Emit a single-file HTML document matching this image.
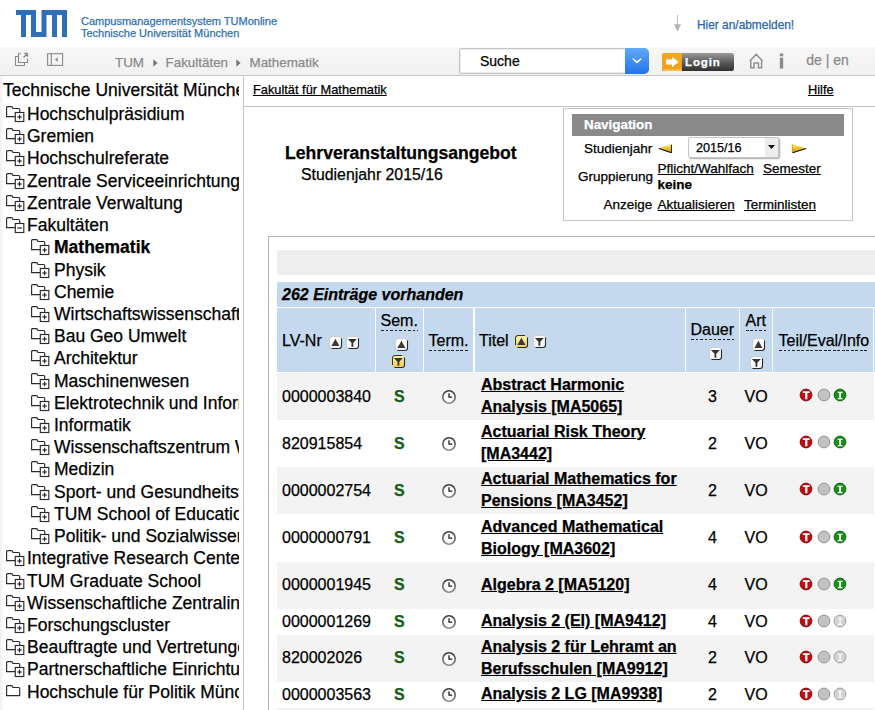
<!DOCTYPE html>
<html><head><meta charset="utf-8">
<style>
*{box-sizing:border-box;margin:0;padding:0}
html,body{width:875px;height:710px;overflow:hidden;background:#fff;font-family:"Liberation Sans",sans-serif;color:#000}
body{position:relative;-webkit-text-stroke:0.25px currentColor}
a{color:#000;text-decoration:underline}
.abs{position:absolute}
#hdr{left:0;top:0;width:875px;height:47px;background:#fff}
#hdrtxt{left:81px;top:15px;font-size:11px;line-height:12px;color:#3070b3;white-space:nowrap}
#anm{left:697px;top:17.500px;font-size:11.900px;line-height:14px;color:#2a66ad;white-space:nowrap}
#tb{left:0;top:47px;width:875px;height:29px;background:linear-gradient(#f7f7f7,#f1f1f1);border-bottom:1px solid #c6c6c6}
.bcw{top:53.500px;font-size:13.400px;line-height:18px;color:#8a8a8a;white-space:nowrap}
#srch{left:459px;top:48px;width:190px;height:25.500px;border:1px solid #c4c4c4;border-radius:1.500px 5px 5px 1.500px;box-shadow:inset 0 0 0 1px #ececec;background:#fff}
#srch span{position:absolute;left:20px;top:3.500px;font-size:14px;line-height:17px;color:#000}
#srchb{left:625px;top:48px;width:24px;height:25.500px;border-radius:0 5px 5px 0;background:linear-gradient(#62aaf8,#2173ea)}
#login{left:662px;top:52.500px;width:71.500px;height:18.500px;background:linear-gradient(#9c9c9c,#5c5c5c 50%,#303030);border-radius:2.500px}
#login .o{position:absolute;left:0;top:0;width:20px;height:18.500px;background:linear-gradient(#f5a623 0,#f5a01a 85%,#f9c673 100%);border-radius:2.500px 0 0 2.500px}
#login .t{position:absolute;left:23px;top:2.300px;font-size:11.500px;font-weight:bold;color:#fff;line-height:14px;letter-spacing:.9px}
#lang{left:806.300px;top:52.200px;font-size:14px;line-height:17px;color:#8a8a8a;white-space:nowrap}
#side{left:0;top:76px;width:244px;height:634px;border-right:1px solid #c9c9c9;overflow:hidden;background:linear-gradient(90deg,#f0f0f0 0,#fff 4px)}
#side .in{position:absolute;left:0;top:3.3px;width:239px;height:640px;overflow:hidden}
.r{height:22.22px;line-height:22.22px;font-size:17.5px;white-space:nowrap;position:relative}
.r.t{padding-left:3px;font-size:17.5px;height:23.7px}
.r .ic{position:absolute;top:3px;width:19px;height:17px}
.r.l1 .ic{left:6px}.r.l1{padding-left:27px}
.r.l2 .ic{left:31px}.r.l2{padding-left:54px}
.r b{font-weight:bold}
#crumb{left:253px;top:83.200px;font-size:12.800px;line-height:14px}
#hilfe{left:808px;top:83.200px;font-size:12.800px;line-height:14px}
#hl{left:244px;top:106px;width:631px;height:1px;background:#c2c2c2}
#nav{left:563px;top:108px;width:290px;height:113px;border:1px solid #c6c6c6;background:#fff}
#navh{left:572px;top:114px;width:272px;height:22px;background:#8a8a8a;color:#fff;font-weight:bold;font-size:13.4px;line-height:22px;padding-left:12px}
.nl{font-size:13.5px;line-height:14px;white-space:nowrap}
#h1{left:285px;top:142.700px;font-size:17.600px;font-weight:bold;line-height:20px;white-space:nowrap}
#h2{left:301px;top:165.700px;font-size:15.850px;line-height:18px;white-space:nowrap}
#box{left:268px;top:236px;width:620px;height:500px;border:1px solid #b4b4b4;background:#fff}
#gbar{left:277px;top:250px;width:598px;height:25px;background:#eee}
#cnt{left:277px;top:282px;width:598px;height:25px;background:#c4d9ee;font-size:16px;font-weight:bold;font-style:italic;line-height:25px;padding-left:5px}
.th{top:308px;height:64px;background:#c4d9ee;font-size:16px}
.th span.lb{position:absolute;white-space:nowrap;line-height:18px}
.dot{padding-bottom:1px;background:repeating-linear-gradient(90deg,#222 0,#222 2.500px,transparent 2.500px,transparent 4.500px) left bottom/100% 1px no-repeat}
.row{left:277px;width:597px}
.row.g{background:#f3f3f3}
.c{position:absolute;font-size:16px;line-height:18px;white-space:nowrap}
.c.s{color:#145e18;font-weight:bold}
.c.ti{font-weight:bold;line-height:22px;white-space:normal;width:212px}
.hl{font-size:16px;line-height:18px;white-space:nowrap}
</style></head><body>

<div id="hdr" class="abs"></div>
<svg width="0" height="0" style="position:absolute"><defs><linearGradient id="gw" x1="0" y1="0" x2="0" y2="1"><stop offset="0" stop-color="#fff"/><stop offset="1" stop-color="#f4f4f4"/></linearGradient><linearGradient id="gc" x1="0" y1="0" x2="0" y2="1"><stop offset="0" stop-color="#3c3c3c"/><stop offset="1" stop-color="#8c8c8c"/></linearGradient><linearGradient id="gy" x1="0" y1="0" x2="0" y2="1"><stop offset="0" stop-color="#fdf3b8"/><stop offset="1" stop-color="#f6cb48"/></linearGradient></defs></svg>
<svg class="abs" style="left:16px;top:10px" width="51" height="27" viewBox="0 0 51 27"><path fill="#2f6fb5" d="M0 0H20V27H15V5H10V27H5V5H0Z M15 22H25.5V0H51V27H46V5H41V27H36V5H30.5V27H15Z"/></svg>
<div id="hdrtxt" class="abs">Campusmanagementsystem TUMonline<br>Technische Universität München</div>
<svg class="abs" style="left:672px;top:14px" width="12" height="19" viewBox="0 0 12 19"><path d="M5.500 1V11" stroke="#bdbdbd" stroke-width="1.1"/><path d="M2 10.300H9L5.500 17.800Z" fill="#b4b4b4"/></svg>
<div id="anm" class="abs">Hier an/abmelden!</div>

<div id="tb" class="abs"></div>
<svg class="abs" style="left:14px;top:52px" width="16" height="15" viewBox="0 0 16 15" fill="none" stroke="#8a8a8a" stroke-width="1.1"><path d="M4.500 4.500H1.500V13.500H10.500V10.700"/><path d="M7 1.700H4.500V10.500H13.500V6.500"/><path d="M9.500 5.500L13.300 1.700M10.300 1.500H13.500V4.700" stroke-width="1.3"/></svg>
<svg class="abs" style="left:46px;top:52px" width="18" height="15" viewBox="0 0 18 15" fill="none" stroke="#8a8a8a" stroke-width="1.1"><rect x="1.600" y="1.700" width="15" height="11.700"/><path d="M5.300 1.700V13.400"/><path d="M11.800 5.200L9 7.500L11.800 9.800Z" fill="#8a8a8a" stroke="none"/></svg>
<div class="abs bcw" style="left:115px">TUM</div><svg class="abs" style="left:152.500px;top:59px" width="5" height="8" viewBox="0 0 5 8"><path d="M0.300 0.300L4.600 4L0.300 7.700Z" fill="#777"/></svg>
<div class="abs bcw" style="left:165.500px">Fakultäten</div><svg class="abs" style="left:236.300px;top:59px" width="5" height="8" viewBox="0 0 5 8"><path d="M0.300 0.300L4.600 4L0.300 7.700Z" fill="#777"/></svg>
<div class="abs bcw" style="left:249.500px">Mathematik</div>
<div id="srch" class="abs"><span>Suche</span></div>
<div id="srchb" class="abs"><svg width="24" height="25" viewBox="0 0 24 25"><path d="M8.300 11L12 14.300L15.700 11" fill="none" stroke="#fff" stroke-width="1.600" stroke-linecap="round" stroke-linejoin="round"/></svg></div>
<div id="login" class="abs"><div class="o"><svg width="20" height="19" viewBox="0 0 20 19"><path d="M4 6.500H10V3.800L16.600 9L10 14.200V11.500H4Z" fill="#fff"/></svg></div><div class="t">Login</div></div>
<svg class="abs" style="left:748px;top:52px" width="17" height="18" viewBox="0 0 17 18" fill="none" stroke="#909090" stroke-width="1.500"><path d="M1.800 9L8.200 2.400L14.600 9M2.800 8.500V15.800H6V11H10.400V15.800H13.600V8.500" stroke-linejoin="miter"/></svg>
<svg class="abs" style="left:777px;top:52px" width="8" height="18" viewBox="0 0 8 18"><rect x="2.800" y="1.500" width="3.400" height="2.800" fill="#8c8c8c"/><rect x="2.800" y="5.700" width="3.400" height="10.900" fill="#8c8c8c"/></svg>
<div id="lang" class="abs">de | en</div>

<div id="side" class="abs"><div class="in">
<div class="r t">Technische Universität München</div>
<div class="r l1"><svg class="ic" width="19" height="17" viewBox="0 0 19 17" fill="none" stroke="#2a2a2a" stroke-width="1.15"><path d="M9 10.600H0.600V1.600Q0.600 0.600 1.600 0.600H5.300Q6.200 0.600 6.500 1.400L6.900 2.500H12.700Q13.700 2.500 13.700 3.500V6.200"/><rect x="9.300" y="6.500" width="8.500" height="9"/><path d="M11.300 11H15.800" stroke-width="1.2"/><path d="M13.550 8.700V13.300" stroke-width="1.2"/></svg>Hochschulpräsidium</div>
<div class="r l1"><svg class="ic" width="19" height="17" viewBox="0 0 19 17" fill="none" stroke="#2a2a2a" stroke-width="1.15"><path d="M9 10.600H0.600V1.600Q0.600 0.600 1.600 0.600H5.300Q6.200 0.600 6.500 1.400L6.900 2.500H12.700Q13.700 2.500 13.700 3.500V6.200"/><rect x="9.300" y="6.500" width="8.500" height="9"/><path d="M11.300 11H15.800" stroke-width="1.2"/><path d="M13.550 8.700V13.300" stroke-width="1.2"/></svg>Gremien</div>
<div class="r l1"><svg class="ic" width="19" height="17" viewBox="0 0 19 17" fill="none" stroke="#2a2a2a" stroke-width="1.15"><path d="M9 10.600H0.600V1.600Q0.600 0.600 1.600 0.600H5.300Q6.200 0.600 6.500 1.400L6.900 2.500H12.700Q13.700 2.500 13.700 3.500V6.200"/><rect x="9.300" y="6.500" width="8.500" height="9"/><path d="M11.300 11H15.800" stroke-width="1.2"/><path d="M13.550 8.700V13.300" stroke-width="1.2"/></svg>Hochschulreferate</div>
<div class="r l1"><svg class="ic" width="19" height="17" viewBox="0 0 19 17" fill="none" stroke="#2a2a2a" stroke-width="1.15"><path d="M9 10.600H0.600V1.600Q0.600 0.600 1.600 0.600H5.300Q6.200 0.600 6.500 1.400L6.900 2.500H12.700Q13.700 2.500 13.700 3.500V6.200"/><rect x="9.300" y="6.500" width="8.500" height="9"/><path d="M11.300 11H15.800" stroke-width="1.2"/><path d="M13.550 8.700V13.300" stroke-width="1.2"/></svg>Zentrale Serviceeinrichtungen</div>
<div class="r l1"><svg class="ic" width="19" height="17" viewBox="0 0 19 17" fill="none" stroke="#2a2a2a" stroke-width="1.15"><path d="M9 10.600H0.600V1.600Q0.600 0.600 1.600 0.600H5.300Q6.200 0.600 6.500 1.400L6.900 2.500H12.700Q13.700 2.500 13.700 3.500V6.200"/><rect x="9.300" y="6.500" width="8.500" height="9"/><path d="M11.300 11H15.800" stroke-width="1.2"/><path d="M13.550 8.700V13.300" stroke-width="1.2"/></svg>Zentrale Verwaltung</div>
<div class="r l1"><svg class="ic" width="19" height="17" viewBox="0 0 19 17" fill="none" stroke="#2a2a2a" stroke-width="1.15"><path d="M9 10.600H0.600V1.600Q0.600 0.600 1.600 0.600H5.300Q6.200 0.600 6.500 1.400L6.900 2.500H12.700Q13.700 2.500 13.700 3.500V6.200"/><rect x="9.300" y="6.500" width="8.500" height="9"/><path d="M11.300 11H15.800" stroke-width="1.2"/></svg>Fakultäten</div>
<div class="r l2"><svg class="ic" width="19" height="17" viewBox="0 0 19 17" fill="none" stroke="#2a2a2a" stroke-width="1.15"><path d="M9 10.600H0.600V1.600Q0.600 0.600 1.600 0.600H5.300Q6.200 0.600 6.500 1.400L6.900 2.500H12.700Q13.700 2.500 13.700 3.500V6.200"/><rect x="9.300" y="6.500" width="8.500" height="9"/><path d="M11.300 11H15.800" stroke-width="1.2"/><path d="M13.550 8.700V13.300" stroke-width="1.2"/></svg><b>Mathematik</b></div>
<div class="r l2"><svg class="ic" width="19" height="17" viewBox="0 0 19 17" fill="none" stroke="#2a2a2a" stroke-width="1.15"><path d="M9 10.600H0.600V1.600Q0.600 0.600 1.600 0.600H5.300Q6.200 0.600 6.500 1.400L6.900 2.500H12.700Q13.700 2.500 13.700 3.500V6.200"/><rect x="9.300" y="6.500" width="8.500" height="9"/><path d="M11.300 11H15.800" stroke-width="1.2"/><path d="M13.550 8.700V13.300" stroke-width="1.2"/></svg>Physik</div>
<div class="r l2"><svg class="ic" width="19" height="17" viewBox="0 0 19 17" fill="none" stroke="#2a2a2a" stroke-width="1.15"><path d="M9 10.600H0.600V1.600Q0.600 0.600 1.600 0.600H5.300Q6.200 0.600 6.500 1.400L6.900 2.500H12.700Q13.700 2.500 13.700 3.500V6.200"/><rect x="9.300" y="6.500" width="8.500" height="9"/><path d="M11.300 11H15.800" stroke-width="1.2"/><path d="M13.550 8.700V13.300" stroke-width="1.2"/></svg>Chemie</div>
<div class="r l2"><svg class="ic" width="19" height="17" viewBox="0 0 19 17" fill="none" stroke="#2a2a2a" stroke-width="1.15"><path d="M9 10.600H0.600V1.600Q0.600 0.600 1.600 0.600H5.300Q6.200 0.600 6.500 1.400L6.900 2.500H12.700Q13.700 2.500 13.700 3.500V6.200"/><rect x="9.300" y="6.500" width="8.500" height="9"/><path d="M11.300 11H15.800" stroke-width="1.2"/><path d="M13.550 8.700V13.300" stroke-width="1.2"/></svg>Wirtschaftswissenschaften</div>
<div class="r l2"><svg class="ic" width="19" height="17" viewBox="0 0 19 17" fill="none" stroke="#2a2a2a" stroke-width="1.15"><path d="M9 10.600H0.600V1.600Q0.600 0.600 1.600 0.600H5.300Q6.200 0.600 6.500 1.400L6.900 2.500H12.700Q13.700 2.500 13.700 3.500V6.200"/><rect x="9.300" y="6.500" width="8.500" height="9"/><path d="M11.300 11H15.800" stroke-width="1.2"/><path d="M13.550 8.700V13.300" stroke-width="1.2"/></svg>Bau Geo Umwelt</div>
<div class="r l2"><svg class="ic" width="19" height="17" viewBox="0 0 19 17" fill="none" stroke="#2a2a2a" stroke-width="1.15"><path d="M9 10.600H0.600V1.600Q0.600 0.600 1.600 0.600H5.300Q6.200 0.600 6.500 1.400L6.900 2.500H12.700Q13.700 2.500 13.700 3.500V6.200"/><rect x="9.300" y="6.500" width="8.500" height="9"/><path d="M11.300 11H15.800" stroke-width="1.2"/><path d="M13.550 8.700V13.300" stroke-width="1.2"/></svg>Architektur</div>
<div class="r l2"><svg class="ic" width="19" height="17" viewBox="0 0 19 17" fill="none" stroke="#2a2a2a" stroke-width="1.15"><path d="M9 10.600H0.600V1.600Q0.600 0.600 1.600 0.600H5.300Q6.200 0.600 6.500 1.400L6.900 2.500H12.700Q13.700 2.500 13.700 3.500V6.200"/><rect x="9.300" y="6.500" width="8.500" height="9"/><path d="M11.300 11H15.800" stroke-width="1.2"/><path d="M13.550 8.700V13.300" stroke-width="1.2"/></svg>Maschinenwesen</div>
<div class="r l2"><svg class="ic" width="19" height="17" viewBox="0 0 19 17" fill="none" stroke="#2a2a2a" stroke-width="1.15"><path d="M9 10.600H0.600V1.600Q0.600 0.600 1.600 0.600H5.300Q6.200 0.600 6.500 1.400L6.900 2.500H12.700Q13.700 2.500 13.700 3.500V6.200"/><rect x="9.300" y="6.500" width="8.500" height="9"/><path d="M11.300 11H15.800" stroke-width="1.2"/><path d="M13.550 8.700V13.300" stroke-width="1.2"/></svg>Elektrotechnik und Informationstechnik</div>
<div class="r l2"><svg class="ic" width="19" height="17" viewBox="0 0 19 17" fill="none" stroke="#2a2a2a" stroke-width="1.15"><path d="M9 10.600H0.600V1.600Q0.600 0.600 1.600 0.600H5.300Q6.200 0.600 6.500 1.400L6.900 2.500H12.700Q13.700 2.500 13.700 3.500V6.200"/><rect x="9.300" y="6.500" width="8.500" height="9"/><path d="M11.300 11H15.800" stroke-width="1.2"/><path d="M13.550 8.700V13.300" stroke-width="1.2"/></svg>Informatik</div>
<div class="r l2"><svg class="ic" width="19" height="17" viewBox="0 0 19 17" fill="none" stroke="#2a2a2a" stroke-width="1.15"><path d="M9 10.600H0.600V1.600Q0.600 0.600 1.600 0.600H5.300Q6.200 0.600 6.500 1.400L6.900 2.500H12.700Q13.700 2.500 13.700 3.500V6.200"/><rect x="9.300" y="6.500" width="8.500" height="9"/><path d="M11.300 11H15.800" stroke-width="1.2"/><path d="M13.550 8.700V13.300" stroke-width="1.2"/></svg>Wissenschaftszentrum Weihenstephan</div>
<div class="r l2"><svg class="ic" width="19" height="17" viewBox="0 0 19 17" fill="none" stroke="#2a2a2a" stroke-width="1.15"><path d="M9 10.600H0.600V1.600Q0.600 0.600 1.600 0.600H5.300Q6.200 0.600 6.500 1.400L6.900 2.500H12.700Q13.700 2.500 13.700 3.500V6.200"/><rect x="9.300" y="6.500" width="8.500" height="9"/><path d="M11.300 11H15.800" stroke-width="1.2"/><path d="M13.550 8.700V13.300" stroke-width="1.2"/></svg>Medizin</div>
<div class="r l2"><svg class="ic" width="19" height="17" viewBox="0 0 19 17" fill="none" stroke="#2a2a2a" stroke-width="1.15"><path d="M9 10.600H0.600V1.600Q0.600 0.600 1.600 0.600H5.300Q6.200 0.600 6.500 1.400L6.900 2.500H12.700Q13.700 2.500 13.700 3.500V6.200"/><rect x="9.300" y="6.500" width="8.500" height="9"/><path d="M11.300 11H15.800" stroke-width="1.2"/><path d="M13.550 8.700V13.300" stroke-width="1.2"/></svg>Sport- und Gesundheitswissenschaften</div>
<div class="r l2"><svg class="ic" width="19" height="17" viewBox="0 0 19 17" fill="none" stroke="#2a2a2a" stroke-width="1.15"><path d="M9 10.600H0.600V1.600Q0.600 0.600 1.600 0.600H5.300Q6.200 0.600 6.500 1.400L6.900 2.500H12.700Q13.700 2.500 13.700 3.500V6.200"/><rect x="9.300" y="6.500" width="8.500" height="9"/><path d="M11.300 11H15.800" stroke-width="1.2"/><path d="M13.550 8.700V13.300" stroke-width="1.2"/></svg>TUM School of Education</div>
<div class="r l2"><svg class="ic" width="19" height="17" viewBox="0 0 19 17" fill="none" stroke="#2a2a2a" stroke-width="1.15"><path d="M9 10.600H0.600V1.600Q0.600 0.600 1.600 0.600H5.300Q6.200 0.600 6.500 1.400L6.900 2.500H12.700Q13.700 2.500 13.700 3.500V6.200"/><rect x="9.300" y="6.500" width="8.500" height="9"/><path d="M11.300 11H15.800" stroke-width="1.2"/><path d="M13.550 8.700V13.300" stroke-width="1.2"/></svg>Politik- und Sozialwissenschaften</div>
<div class="r l1"><svg class="ic" width="19" height="17" viewBox="0 0 19 17" fill="none" stroke="#2a2a2a" stroke-width="1.15"><path d="M9 10.600H0.600V1.600Q0.600 0.600 1.600 0.600H5.300Q6.200 0.600 6.500 1.400L6.900 2.500H12.700Q13.700 2.500 13.700 3.500V6.200"/><rect x="9.300" y="6.500" width="8.500" height="9"/><path d="M11.300 11H15.800" stroke-width="1.2"/><path d="M13.550 8.700V13.300" stroke-width="1.2"/></svg>Integrative Research Center</div>
<div class="r l1"><svg class="ic" width="19" height="17" viewBox="0 0 19 17" fill="none" stroke="#2a2a2a" stroke-width="1.15"><path d="M9 10.600H0.600V1.600Q0.600 0.600 1.600 0.600H5.300Q6.200 0.600 6.500 1.400L6.900 2.500H12.700Q13.700 2.500 13.700 3.500V6.200"/><rect x="9.300" y="6.500" width="8.500" height="9"/><path d="M11.300 11H15.800" stroke-width="1.2"/><path d="M13.550 8.700V13.300" stroke-width="1.2"/></svg>TUM Graduate School</div>
<div class="r l1"><svg class="ic" width="19" height="17" viewBox="0 0 19 17" fill="none" stroke="#2a2a2a" stroke-width="1.15"><path d="M9 10.600H0.600V1.600Q0.600 0.600 1.600 0.600H5.300Q6.200 0.600 6.500 1.400L6.900 2.500H12.700Q13.700 2.500 13.700 3.500V6.200"/><rect x="9.300" y="6.500" width="8.500" height="9"/><path d="M11.300 11H15.800" stroke-width="1.2"/><path d="M13.550 8.700V13.300" stroke-width="1.2"/></svg>Wissenschaftliche Zentralinstitute</div>
<div class="r l1"><svg class="ic" width="19" height="17" viewBox="0 0 19 17" fill="none" stroke="#2a2a2a" stroke-width="1.15"><path d="M9 10.600H0.600V1.600Q0.600 0.600 1.600 0.600H5.300Q6.200 0.600 6.500 1.400L6.900 2.500H12.700Q13.700 2.500 13.700 3.500V6.200"/><rect x="9.300" y="6.500" width="8.500" height="9"/><path d="M11.300 11H15.800" stroke-width="1.2"/><path d="M13.550 8.700V13.300" stroke-width="1.2"/></svg>Forschungscluster</div>
<div class="r l1"><svg class="ic" width="19" height="17" viewBox="0 0 19 17" fill="none" stroke="#2a2a2a" stroke-width="1.15"><path d="M9 10.600H0.600V1.600Q0.600 0.600 1.600 0.600H5.300Q6.200 0.600 6.500 1.400L6.900 2.500H12.700Q13.700 2.500 13.700 3.500V6.200"/><rect x="9.300" y="6.500" width="8.500" height="9"/><path d="M11.300 11H15.800" stroke-width="1.2"/><path d="M13.550 8.700V13.300" stroke-width="1.2"/></svg>Beauftragte und Vertretungen</div>
<div class="r l1"><svg class="ic" width="19" height="17" viewBox="0 0 19 17" fill="none" stroke="#2a2a2a" stroke-width="1.15"><path d="M9 10.600H0.600V1.600Q0.600 0.600 1.600 0.600H5.300Q6.200 0.600 6.500 1.400L6.900 2.500H12.700Q13.700 2.500 13.700 3.500V6.200"/><rect x="9.300" y="6.500" width="8.500" height="9"/><path d="M11.300 11H15.800" stroke-width="1.2"/><path d="M13.550 8.700V13.300" stroke-width="1.2"/></svg>Partnerschaftliche Einrichtungen</div>
<div class="r l1"><svg class="ic" style="top:4.400px" width="19" height="17" viewBox="0 0 19 17" fill="none" stroke="#2a2a2a" stroke-width="1.15"><path d="M0.600 10.600V1.600Q0.600 0.600 1.600 0.600H5.300Q6.200 0.600 6.500 1.400L6.900 2.500H12.700Q13.700 2.500 13.700 3.500V10.600Z"/></svg>Hochschule für Politik München</div>
</div></div>

<a id="crumb" class="abs">Fakultät für Mathematik</a>
<a id="hilfe" class="abs">Hilfe</a>
<div id="hl" class="abs"></div>
<div id="nav" class="abs"></div>
<div id="navh" class="abs">Navigation</div>
<div class="abs nl" style="left:584px;top:142px">Studienjahr</div>
<svg class="abs" style="left:658px;top:143px" width="15" height="11" viewBox="0 0 15 11"><defs><linearGradient id="gd" x1="0" y1="0" x2="0" y2="1"><stop offset="0" stop-color="#fff0a0"/><stop offset=".35" stop-color="#f0cf45"/><stop offset=".75" stop-color="#d6ab18"/><stop offset="1" stop-color="#b88c10"/></linearGradient></defs><path d="M0.800 5.300L13.700 1V9.900Z" fill="url(#gd)"/><path d="M0.800 5.500L13.400 9.700" stroke="#151005" stroke-width="1.100" fill="none"/><path d="M13.500 1.800V9.900" stroke="#3a1c0a" stroke-width="1" fill="none"/></svg>
<div class="abs" style="left:688px;top:137px;width:91px;height:21px;border:1px solid #c4c4c4;border-radius:2px;background:#fff;box-shadow:1px 1px 1.500px rgba(0,0,0,.35)"></div>
<div class="abs" style="left:765px;top:138px;width:13px;height:19px;background:#ececec;border-radius:0 2px 2px 0"></div>
<svg class="abs" style="left:767px;top:144px" width="9" height="6" viewBox="0 0 9 6"><path d="M1 1H8L4.500 5Z" fill="#111"/></svg>
<div class="abs" style="left:696px;top:141px;font-size:12.600px;line-height:14px">2015/16</div>
<svg class="abs" style="left:791px;top:143px" width="16" height="11" viewBox="0 0 16 11"><path d="M15.200 5.300L1 1V9.900Z" fill="url(#gd)"/><path d="M1.300 1.300V9.500" stroke="#caa224" stroke-width="1" fill="none"/><path d="M15.200 5.500L1.600 9.700" stroke="#151005" stroke-width="1.100" fill="none"/></svg>
<div class="abs nl" style="left:578px;top:170px">Gruppierung</div>
<a class="abs nl" style="left:657.500px;top:161.500px">Pflicht/Wahlfach</a>
<a class="abs nl" style="left:763px;top:161.500px">Semester</a>
<div class="abs nl" style="left:657.500px;top:178px;font-weight:bold">keine</div>
<div class="abs nl" style="left:603.500px;top:197.500px">Anzeige</div>
<a class="abs nl" style="left:657.500px;top:197.500px">Aktualisieren</a>
<a class="abs nl" style="left:744px;top:197.500px">Terminlisten</a>
<div id="h1" class="abs">Lehrveranstaltungsangebot</div>
<div id="h2" class="abs">Studienjahr 2015/16</div>

<div id="box" class="abs"></div>
<div id="gbar" class="abs"></div>
<div id="cnt" class="abs">262 Einträge vorhanden</div>
<div class="abs th" style="left:277px;width:98.19999999999999px"></div><div class="abs th" style="left:376.2px;width:47.0px"></div><div class="abs th" style="left:424.2px;width:49.30000000000001px"></div><div class="abs th" style="left:474.5px;width:210.60000000000002px"></div><div class="abs th" style="left:686.1px;width:53.10000000000002px"></div><div class="abs th" style="left:740.2px;width:31.799999999999955px"></div><div class="abs th" style="left:773px;width:99.89999999999998px"></div><div class="abs th" style="left:873.900px;width:1.100px"></div><div class="abs hl" style="left:282px;top:331.500px">LV-Nr</div><svg class="abs" style="left:328px;top:335px" width="15" height="15" viewBox="-1 -1 15 15"><rect x="0.500" y="0.500" width="12" height="12" rx="2.600" fill="url(#gw)" stroke="#c9c9c9" stroke-width="1"/><path d="M12.500 2.500V10Q12.500 12.500 10 12.500H2.500" fill="none" stroke="#2a2a2a" stroke-width="1.1"/><path d="M0.500 10V3Q0.500 0.500 3 0.500H10" fill="none" stroke="#cfcfcf" stroke-width="1"/><path d="M6.400 2.700L10.400 10.100H2.400Z" fill="#3a3a3a"/></svg><svg class="abs" style="left:345px;top:335px" width="15" height="15" viewBox="-1 -1 15 15"><rect x="0.500" y="0.500" width="12" height="12" rx="2.600" fill="url(#gw)" stroke="#c9c9c9" stroke-width="1"/><path d="M12.500 2.500V10Q12.500 12.500 10 12.500H2.500" fill="none" stroke="#2a2a2a" stroke-width="1.1"/><path d="M0.500 10V3Q0.500 0.500 3 0.500H10" fill="none" stroke="#cfcfcf" stroke-width="1"/><path d="M1.900 2.900H10.900L7.300 6.800V10.800H5.500V6.800Z" fill="#333"/></svg><div class="abs hl dot" style="left:380.500px;top:311.500px">Sem.</div><svg class="abs" style="left:393.7px;top:337px" width="15" height="15" viewBox="-1 -1 15 15"><rect x="0.500" y="0.500" width="12" height="12" rx="2.600" fill="url(#gw)" stroke="#c9c9c9" stroke-width="1"/><path d="M12.500 2.500V10Q12.500 12.500 10 12.500H2.500" fill="none" stroke="#2a2a2a" stroke-width="1.1"/><path d="M0.500 10V3Q0.500 0.500 3 0.500H10" fill="none" stroke="#cfcfcf" stroke-width="1"/><path d="M6.400 2.700L10.400 10.100H2.400Z" fill="#3a3a3a"/></svg><svg class="abs" style="left:391.3px;top:354px" width="15" height="15" viewBox="-1 -1 15 15"><rect x="0.500" y="0.500" width="12" height="12" rx="2.600" fill="url(#gy)" stroke="#c9c9c9" stroke-width="1"/><path d="M12.500 2.500V10Q12.500 12.500 10 12.500H2.500" fill="none" stroke="#2a2a2a" stroke-width="1.1"/><path d="M0.500 10V3Q0.500 0.500 3 0.500H10" fill="none" stroke="#3a3320" stroke-width="1"/><path d="M1.900 2.900H10.900L7.300 6.800V10.800H5.500V6.800Z" fill="#333"/></svg><div class="abs hl dot" style="left:428.500px;top:331.500px">Term.</div><div class="abs hl" style="left:479px;top:331.500px">Titel</div><svg class="abs" style="left:514.3px;top:334.3px" width="15" height="15" viewBox="-1 -1 15 15"><rect x="0.500" y="0.500" width="12" height="12" rx="2.600" fill="url(#gy)" stroke="#c9c9c9" stroke-width="1"/><path d="M12.500 2.500V10Q12.500 12.500 10 12.500H2.500" fill="none" stroke="#2a2a2a" stroke-width="1.1"/><path d="M0.500 10V3Q0.500 0.500 3 0.500H10" fill="none" stroke="#3a3320" stroke-width="1"/><path d="M6.400 2.700L10.400 10.100H2.400Z" fill="#3a3a3a"/></svg><svg class="abs" style="left:532px;top:334.3px" width="15" height="15" viewBox="-1 -1 15 15"><rect x="0.500" y="0.500" width="12" height="12" rx="2.600" fill="url(#gw)" stroke="#c9c9c9" stroke-width="1"/><path d="M12.500 2.500V10Q12.500 12.500 10 12.500H2.500" fill="none" stroke="#2a2a2a" stroke-width="1.1"/><path d="M0.500 10V3Q0.500 0.500 3 0.500H10" fill="none" stroke="#cfcfcf" stroke-width="1"/><path d="M1.900 2.900H10.900L7.300 6.800V10.800H5.500V6.800Z" fill="#333"/></svg><div class="abs hl dot" style="left:690.500px;top:320.500px">Dauer</div><svg class="abs" style="left:707.7px;top:346px" width="15" height="15" viewBox="-1 -1 15 15"><rect x="0.500" y="0.500" width="12" height="12" rx="2.600" fill="url(#gw)" stroke="#c9c9c9" stroke-width="1"/><path d="M12.500 2.500V10Q12.500 12.500 10 12.500H2.500" fill="none" stroke="#2a2a2a" stroke-width="1.1"/><path d="M0.500 10V3Q0.500 0.500 3 0.500H10" fill="none" stroke="#cfcfcf" stroke-width="1"/><path d="M1.900 2.900H10.900L7.300 6.800V10.800H5.500V6.800Z" fill="#333"/></svg><div class="abs hl dot" style="left:745.500px;top:311.500px">Art</div><svg class="abs" style="left:750.5px;top:337px" width="15" height="15" viewBox="-1 -1 15 15"><rect x="0.500" y="0.500" width="12" height="12" rx="2.600" fill="url(#gw)" stroke="#c9c9c9" stroke-width="1"/><path d="M12.500 2.500V10Q12.500 12.500 10 12.500H2.500" fill="none" stroke="#2a2a2a" stroke-width="1.1"/><path d="M0.500 10V3Q0.500 0.500 3 0.500H10" fill="none" stroke="#cfcfcf" stroke-width="1"/><path d="M6.400 2.700L10.400 10.100H2.400Z" fill="#3a3a3a"/></svg><svg class="abs" style="left:748.7px;top:355px" width="15" height="15" viewBox="-1 -1 15 15"><rect x="0.500" y="0.500" width="12" height="12" rx="2.600" fill="url(#gw)" stroke="#c9c9c9" stroke-width="1"/><path d="M12.500 2.500V10Q12.500 12.500 10 12.500H2.500" fill="none" stroke="#2a2a2a" stroke-width="1.1"/><path d="M0.500 10V3Q0.500 0.500 3 0.500H10" fill="none" stroke="#cfcfcf" stroke-width="1"/><path d="M1.900 2.900H10.900L7.300 6.800V10.800H5.500V6.800Z" fill="#333"/></svg><div class="abs hl dot" style="left:778.500px;top:331.500px">Teil/Eval/Info</div>
<div class="row abs g" style="top:373px;height:47px"></div>
<div class="abs c" style="left:282px;top:387.6px">0000003840</div><div class="abs c s" style="left:394px;top:387.6px">S</div><svg class="abs" style="left:441px;top:388.8px" width="16" height="16" viewBox="0 0 16 16"><circle cx="8" cy="8" r="6.200" fill="#fdfdfd" stroke="url(#gc)" stroke-width="1.600"/><path d="M8 4.300V8.200H11.200" fill="none" stroke="#1a1a1a" stroke-width="1.250"/></svg><div class="abs c ti" style="left:481px;top:374.35px"><a>Abstract Harmonic<br>Analysis [MA5065]</a></div><div class="abs c" style="left:708px;top:387.6px">3</div><div class="abs c" style="left:744.600px;top:387.6px">VO</div><svg class="abs" style="left:798.6px;top:388.3px" width="14" height="14" viewBox="0 0 14 14"><circle cx="7" cy="7" r="5.900" fill="#c00c10" stroke="#7d0508" stroke-width="0.900"/><path d="M3.800 3.200H10.700V5H8.400V11.200H6.200V5H3.800Z" fill="#fff"/></svg><svg class="abs" style="left:816.6px;top:388.3px" width="14" height="14" viewBox="0 0 14 14"><circle cx="7" cy="7" r="5.900" fill="#c2c2c2" stroke="#8c8c8c" stroke-width="0.900"/></svg><svg class="abs" style="left:833.4px;top:388.3px" width="14" height="14" viewBox="0 0 14 14"><circle cx="7" cy="7" r="5.900" fill="#17901a" stroke="#0d5f10" stroke-width="0.900"/><path d="M4.700 3.700H9.500V5H8V9.900H9.500V11.200H4.700V9.900H6.200V5H4.700Z" fill="#fff"/></svg>
<div class="row abs" style="top:420px;height:47px"></div>
<div class="abs c" style="left:282px;top:434.6px">820915854</div><div class="abs c s" style="left:394px;top:434.6px">S</div><svg class="abs" style="left:441px;top:435.8px" width="16" height="16" viewBox="0 0 16 16"><circle cx="8" cy="8" r="6.200" fill="#fdfdfd" stroke="url(#gc)" stroke-width="1.600"/><path d="M8 4.300V8.200H11.200" fill="none" stroke="#1a1a1a" stroke-width="1.250"/></svg><div class="abs c ti" style="left:481px;top:421.35px"><a>Actuarial Risk Theory<br>[MA3442]</a></div><div class="abs c" style="left:708px;top:434.6px">2</div><div class="abs c" style="left:744.600px;top:434.6px">VO</div><svg class="abs" style="left:798.6px;top:435.3px" width="14" height="14" viewBox="0 0 14 14"><circle cx="7" cy="7" r="5.900" fill="#c00c10" stroke="#7d0508" stroke-width="0.900"/><path d="M3.800 3.200H10.700V5H8.400V11.200H6.200V5H3.800Z" fill="#fff"/></svg><svg class="abs" style="left:816.6px;top:435.3px" width="14" height="14" viewBox="0 0 14 14"><circle cx="7" cy="7" r="5.900" fill="#c2c2c2" stroke="#8c8c8c" stroke-width="0.900"/></svg><svg class="abs" style="left:833.4px;top:435.3px" width="14" height="14" viewBox="0 0 14 14"><circle cx="7" cy="7" r="5.900" fill="#17901a" stroke="#0d5f10" stroke-width="0.900"/><path d="M4.700 3.700H9.500V5H8V9.900H9.500V11.200H4.700V9.900H6.200V5H4.700Z" fill="#fff"/></svg>
<div class="row abs g" style="top:467px;height:47px"></div>
<div class="abs c" style="left:282px;top:481.6px">0000002754</div><div class="abs c s" style="left:394px;top:481.6px">S</div><svg class="abs" style="left:441px;top:482.8px" width="16" height="16" viewBox="0 0 16 16"><circle cx="8" cy="8" r="6.200" fill="#fdfdfd" stroke="url(#gc)" stroke-width="1.600"/><path d="M8 4.300V8.200H11.200" fill="none" stroke="#1a1a1a" stroke-width="1.250"/></svg><div class="abs c ti" style="left:481px;top:468.35px"><a>Actuarial Mathematics for<br>Pensions [MA3452]</a></div><div class="abs c" style="left:708px;top:481.6px">2</div><div class="abs c" style="left:744.600px;top:481.6px">VO</div><svg class="abs" style="left:798.6px;top:482.3px" width="14" height="14" viewBox="0 0 14 14"><circle cx="7" cy="7" r="5.900" fill="#c00c10" stroke="#7d0508" stroke-width="0.900"/><path d="M3.800 3.200H10.700V5H8.400V11.200H6.200V5H3.800Z" fill="#fff"/></svg><svg class="abs" style="left:816.6px;top:482.3px" width="14" height="14" viewBox="0 0 14 14"><circle cx="7" cy="7" r="5.900" fill="#c2c2c2" stroke="#8c8c8c" stroke-width="0.900"/></svg><svg class="abs" style="left:833.4px;top:482.3px" width="14" height="14" viewBox="0 0 14 14"><circle cx="7" cy="7" r="5.900" fill="#17901a" stroke="#0d5f10" stroke-width="0.900"/><path d="M4.700 3.700H9.500V5H8V9.900H9.500V11.200H4.700V9.900H6.200V5H4.700Z" fill="#fff"/></svg>
<div class="row abs" style="top:514px;height:48px"></div>
<div class="abs c" style="left:282px;top:529.1px">0000000791</div><div class="abs c s" style="left:394px;top:529.1px">S</div><svg class="abs" style="left:441px;top:530.3px" width="16" height="16" viewBox="0 0 16 16"><circle cx="8" cy="8" r="6.200" fill="#fdfdfd" stroke="url(#gc)" stroke-width="1.600"/><path d="M8 4.300V8.200H11.200" fill="none" stroke="#1a1a1a" stroke-width="1.250"/></svg><div class="abs c ti" style="left:481px;top:515.85px"><a>Advanced Mathematical<br>Biology [MA3602]</a></div><div class="abs c" style="left:708px;top:529.1px">4</div><div class="abs c" style="left:744.600px;top:529.1px">VO</div><svg class="abs" style="left:798.6px;top:529.8px" width="14" height="14" viewBox="0 0 14 14"><circle cx="7" cy="7" r="5.900" fill="#c00c10" stroke="#7d0508" stroke-width="0.900"/><path d="M3.800 3.200H10.700V5H8.400V11.200H6.200V5H3.800Z" fill="#fff"/></svg><svg class="abs" style="left:816.6px;top:529.8px" width="14" height="14" viewBox="0 0 14 14"><circle cx="7" cy="7" r="5.900" fill="#c2c2c2" stroke="#8c8c8c" stroke-width="0.900"/></svg><svg class="abs" style="left:833.4px;top:529.8px" width="14" height="14" viewBox="0 0 14 14"><circle cx="7" cy="7" r="5.900" fill="#17901a" stroke="#0d5f10" stroke-width="0.900"/><path d="M4.700 3.700H9.500V5H8V9.900H9.500V11.200H4.700V9.900H6.200V5H4.700Z" fill="#fff"/></svg>
<div class="row abs g" style="top:562px;height:46.5px"></div>
<div class="abs c" style="left:282px;top:576.35px">0000001945</div><div class="abs c s" style="left:394px;top:576.35px">S</div><svg class="abs" style="left:441px;top:577.55px" width="16" height="16" viewBox="0 0 16 16"><circle cx="8" cy="8" r="6.200" fill="#fdfdfd" stroke="url(#gc)" stroke-width="1.600"/><path d="M8 4.300V8.200H11.200" fill="none" stroke="#1a1a1a" stroke-width="1.250"/></svg><div class="abs c ti" style="left:481px;top:574.4px"><a>Algebra 2 [MA5120]</a></div><div class="abs c" style="left:708px;top:576.35px">4</div><div class="abs c" style="left:744.600px;top:576.35px">VO</div><svg class="abs" style="left:798.6px;top:577.05px" width="14" height="14" viewBox="0 0 14 14"><circle cx="7" cy="7" r="5.900" fill="#c00c10" stroke="#7d0508" stroke-width="0.900"/><path d="M3.800 3.200H10.700V5H8.400V11.200H6.200V5H3.800Z" fill="#fff"/></svg><svg class="abs" style="left:816.6px;top:577.05px" width="14" height="14" viewBox="0 0 14 14"><circle cx="7" cy="7" r="5.900" fill="#c2c2c2" stroke="#8c8c8c" stroke-width="0.900"/></svg><svg class="abs" style="left:833.4px;top:577.05px" width="14" height="14" viewBox="0 0 14 14"><circle cx="7" cy="7" r="5.900" fill="#17901a" stroke="#0d5f10" stroke-width="0.900"/><path d="M4.700 3.700H9.500V5H8V9.900H9.500V11.200H4.700V9.900H6.200V5H4.700Z" fill="#fff"/></svg>
<div class="row abs" style="top:608.5px;height:26.5px"></div>
<div class="abs c" style="left:282px;top:612.85px">0000001269</div><div class="abs c s" style="left:394px;top:612.85px">S</div><svg class="abs" style="left:441px;top:614.05px" width="16" height="16" viewBox="0 0 16 16"><circle cx="8" cy="8" r="6.200" fill="#fdfdfd" stroke="url(#gc)" stroke-width="1.600"/><path d="M8 4.300V8.200H11.200" fill="none" stroke="#1a1a1a" stroke-width="1.250"/></svg><div class="abs c ti" style="left:481px;top:610.15px"><a>Analysis 2 (EI) [MA9412]</a></div><div class="abs c" style="left:708px;top:612.85px">4</div><div class="abs c" style="left:744.600px;top:612.85px">VO</div><svg class="abs" style="left:798.6px;top:613.55px" width="14" height="14" viewBox="0 0 14 14"><circle cx="7" cy="7" r="5.900" fill="#c00c10" stroke="#7d0508" stroke-width="0.900"/><path d="M3.800 3.200H10.700V5H8.400V11.200H6.200V5H3.800Z" fill="#fff"/></svg><svg class="abs" style="left:816.6px;top:613.55px" width="14" height="14" viewBox="0 0 14 14"><circle cx="7" cy="7" r="5.900" fill="#c2c2c2" stroke="#8c8c8c" stroke-width="0.900"/></svg><svg class="abs" style="left:833.4px;top:613.55px" width="14" height="14" viewBox="0 0 14 14"><circle cx="7" cy="7" r="5.900" fill="#d2d2d2" stroke="#999" stroke-width="0.900"/><path d="M4.700 3.700H9.500V5H8V9.900H9.500V11.200H4.700V9.900H6.200V5H4.700Z" fill="#f4f4f4"/></svg>
<div class="row abs g" style="top:635px;height:46.5px"></div>
<div class="abs c" style="left:282px;top:649.35px">820002026</div><div class="abs c s" style="left:394px;top:649.35px">S</div><svg class="abs" style="left:441px;top:650.55px" width="16" height="16" viewBox="0 0 16 16"><circle cx="8" cy="8" r="6.200" fill="#fdfdfd" stroke="url(#gc)" stroke-width="1.600"/><path d="M8 4.300V8.200H11.200" fill="none" stroke="#1a1a1a" stroke-width="1.250"/></svg><div class="abs c ti" style="left:481px;top:636.1px"><a>Analysis 2 für Lehramt an<br>Berufsschulen [MA9912]</a></div><div class="abs c" style="left:708px;top:649.35px">2</div><div class="abs c" style="left:744.600px;top:649.35px">VO</div><svg class="abs" style="left:798.6px;top:650.05px" width="14" height="14" viewBox="0 0 14 14"><circle cx="7" cy="7" r="5.900" fill="#c00c10" stroke="#7d0508" stroke-width="0.900"/><path d="M3.800 3.200H10.700V5H8.400V11.200H6.200V5H3.800Z" fill="#fff"/></svg><svg class="abs" style="left:816.6px;top:650.05px" width="14" height="14" viewBox="0 0 14 14"><circle cx="7" cy="7" r="5.900" fill="#c2c2c2" stroke="#8c8c8c" stroke-width="0.900"/></svg><svg class="abs" style="left:833.4px;top:650.05px" width="14" height="14" viewBox="0 0 14 14"><circle cx="7" cy="7" r="5.900" fill="#d2d2d2" stroke="#999" stroke-width="0.900"/><path d="M4.700 3.700H9.500V5H8V9.900H9.500V11.200H4.700V9.900H6.200V5H4.700Z" fill="#f4f4f4"/></svg>
<div class="row abs" style="top:681.5px;height:26.5px"></div>
<div class="abs c" style="left:282px;top:685.85px">0000003563</div><div class="abs c s" style="left:394px;top:685.85px">S</div><svg class="abs" style="left:441px;top:687.05px" width="16" height="16" viewBox="0 0 16 16"><circle cx="8" cy="8" r="6.200" fill="#fdfdfd" stroke="url(#gc)" stroke-width="1.600"/><path d="M8 4.300V8.200H11.200" fill="none" stroke="#1a1a1a" stroke-width="1.250"/></svg><div class="abs c ti" style="left:481px;top:683.15px"><a>Analysis 2 LG [MA9938]</a></div><div class="abs c" style="left:708px;top:685.85px">2</div><div class="abs c" style="left:744.600px;top:685.85px">VO</div><svg class="abs" style="left:798.6px;top:686.55px" width="14" height="14" viewBox="0 0 14 14"><circle cx="7" cy="7" r="5.900" fill="#c00c10" stroke="#7d0508" stroke-width="0.900"/><path d="M3.800 3.200H10.700V5H8.400V11.200H6.200V5H3.800Z" fill="#fff"/></svg><svg class="abs" style="left:816.6px;top:686.55px" width="14" height="14" viewBox="0 0 14 14"><circle cx="7" cy="7" r="5.900" fill="#c2c2c2" stroke="#8c8c8c" stroke-width="0.900"/></svg><svg class="abs" style="left:833.4px;top:686.55px" width="14" height="14" viewBox="0 0 14 14"><circle cx="7" cy="7" r="5.900" fill="#d2d2d2" stroke="#999" stroke-width="0.900"/><path d="M4.700 3.700H9.500V5H8V9.900H9.500V11.200H4.700V9.900H6.200V5H4.700Z" fill="#f4f4f4"/></svg>
<div class="row abs g" style="top:708px;height:52px"></div>


</body></html>
